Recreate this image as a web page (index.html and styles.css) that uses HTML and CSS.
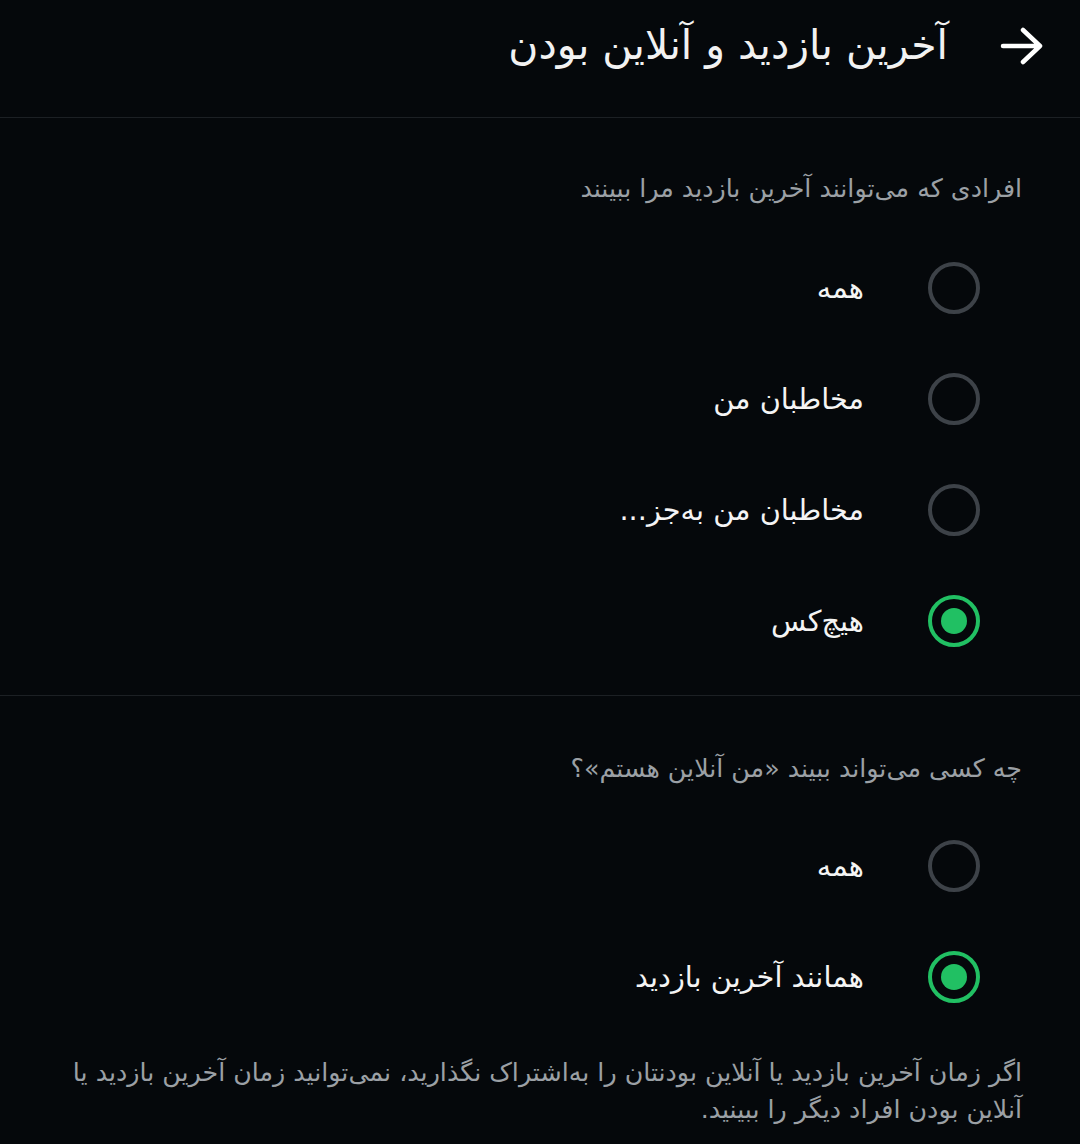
FILE: index.html
```html
<!DOCTYPE html>
<html lang="fa" dir="rtl">
<head>
<meta charset="utf-8">
<link rel="stylesheet" href="styles.css">
</head>
<body>
<header class="header">
  <svg class="back" width="44" height="38" viewBox="0 0 44 38"><path d="M3 19 H40 M23 3 L40 19 L23 35" fill="none" stroke="#fff" stroke-width="4.5" stroke-linecap="round" stroke-linejoin="round"/></svg>
  <h1 class="title">آخرین بازدید و آنلاین بودن</h1>
</header>
<section class="section first">
  <div class="label">افرادی که می‌توانند آخرین بازدید مرا ببینند</div>
  <div class="rows">
    <div class="row"><span class="radio"></span><span class="text">همه</span></div>
    <div class="row"><span class="radio"></span><span class="text">مخاطبان من</span></div>
    <div class="row"><span class="radio"></span><span class="text">مخاطبان من به‌جز...</span></div>
    <div class="row"><span class="radio on"></span><span class="text">هیچ‌کس</span></div>
  </div>
</section>
<section class="section second">
  <div class="label">چه کسی می‌تواند ببیند «من آنلاین هستم»؟</div>
  <div class="rows">
    <div class="row"><span class="radio"></span><span class="text">همه</span></div>
    <div class="row"><span class="radio on"></span><span class="text">همانند آخرین بازدید</span></div>
  </div>
  <p class="note">اگر زمان آخرین بازدید یا آنلاین بودنتان را به‌اشتراک نگذارید، نمی‌توانید زمان آخرین بازدید یا آنلاین بودن افراد دیگر را ببینید.</p>
</section>
</body>
</html>
```
FILE: styles.css
```css
html, body {
  margin: 0;
  padding: 0;
  background: #05080b;
}
body {
  font-family: "DejaVu Sans", "Noto Sans", sans-serif;
  color: #ffffff;
  width: 1080px;
  height: 1144px;
  overflow: hidden;
}
.header {
  height: 118px;
  box-sizing: border-box;
  border-bottom: 1px solid #1c2024;
  display: flex;
  align-items: center;
  padding-right: 36px;
  gap: 52px;
  padding-bottom: 26px;
}
.back { display: block; }
.title {
  margin: 0;
  font-size: 41px;
  font-weight: normal;
  line-height: 1;
  color: #f2f2f2;
}
.section {
  padding: 0 58px 0 58px;
}
.section.first {
  padding-top: 53px;
  padding-bottom: 19px;
  border-bottom: 1px solid #1c2024;
}
.section.second {
  padding-top: 55px;
}
.label {
  font-size: 25.3px;
  line-height: 36px;
  color: #9ba0a5;
}
.first .rows { margin-top: 25px; }
.second .rows { margin-top: 23px; }
.row {
  height: 111px;
  display: flex;
  align-items: center;
  gap: 64px;
  padding-right: 42px;
}
.radio {
  width: 52px;
  height: 52px;
  box-sizing: border-box;
  border: 4.5px solid #3d4248;
  border-radius: 50%;
  display: flex;
  align-items: center;
  justify-content: center;
  flex: none;
}
.radio.on {
  border-color: #21c063;
}
.radio.on::after {
  content: "";
  width: 26px;
  height: 26px;
  border-radius: 50%;
  background: #21c063;
}
.text {
  font-size: 28.8px;
  line-height: 40px;
  color: #f4f4f4;
}
.note {
  margin: 22px 0 0 0;
  font-size: 25.3px;
  line-height: 37px;
  color: #9ba0a5;
}
```
